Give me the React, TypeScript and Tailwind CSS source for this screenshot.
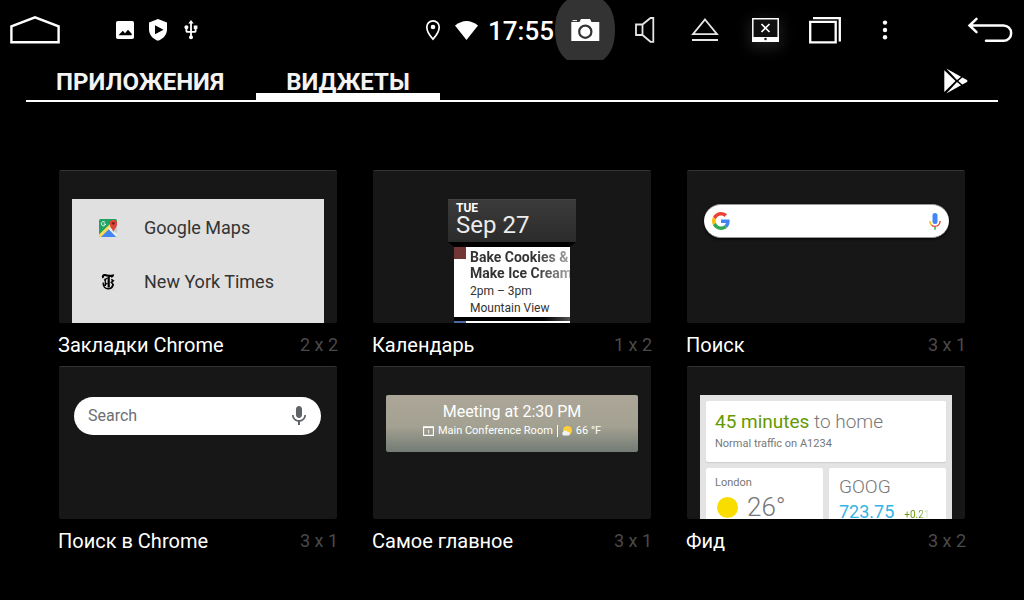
import type { ReactNode } from "react";
import { MdUsb, MdMic } from "react-icons/md";

function HomeIcon() {
  return (
    <svg width="50" height="28" viewBox="0 0 50 28" fill="none" stroke="#fff" strokeWidth="2.4">
      <path d="M1.4 26.2V10.4L25 1.4l23.6 9v15.8z" />
    </svg>
  );
}

function PictureIcon() {
  return (
    <svg width="18" height="18" viewBox="0 0 18 18" fill="#fff" fillRule="evenodd">
      <path d="M1.8 0h14.4Q18 0 18 1.8v14.4q0 1.8-1.8 1.8H1.8Q0 18 0 16.200V1.800Q0 0 1.800 0zM2.500 14.300h13.200v-1.600l-3.700-4-3 3.500-2.200-2.400z" />
    </svg>
  );
}

function ShieldIcon() {
  return (
    <svg width="18" height="22" viewBox="0 0 18 22" fill="#fff" fillRule="evenodd">
      <path d="M9 0l9 3.400V10.500C18 15.500 14.500 19.800 9 21.700 3.500 19.800 0 15.500 0 10.500V3.400zM6 6.300v9l8.500-4.500z" />
    </svg>
  );
}

function PinIcon() {
  return (
    <svg width="24" height="24" viewBox="0 0 24 24" fill="none" stroke="#fff" strokeWidth="1.7">
      <path d="M12 21.200S5.800 14.500 5.800 9a6.200 6.200 0 0 1 12.400 0c0 5.500-6.200 12.200-6.200 12.200z" />
      <circle cx="12" cy="9" r="2.300" fill="#fff" stroke="none" />
    </svg>
  );
}

function WifiIcon() {
  return (
    <svg width="23" height="19" viewBox="0 0 23 19" fill="#fff">
      <path d="M0 4.500Q11.500-4.500 23 4.500L11.500 19z" />
    </svg>
  );
}

function CameraIcon() {
  return (
    <svg width="60" height="60" viewBox="0 0 60 60">
      <path d="M12 0C4 6 0 16 0 30s4 24 12 30h36c8-6 12-16 12-30S56 6 48 0z" fill="#333" />
      <path d="M16.300 22h8.200l1.500-3h9l1.500 3H44.300v19h-28z" fill="#fff" />
      <path d="M17.500 20.600h4.500" stroke="#fff" strokeWidth="1" />
      <circle cx="30.300" cy="31.700" r="6.100" fill="#fff" stroke="#333" strokeWidth="2.200" />
    </svg>
  );
}

function SpeakerIcon() {
  return (
    <svg width="20" height="26" viewBox="0 0 20 26" fill="none" stroke="#e6e6e6" strokeWidth="1.800">
      <path d="M1 7.500h6.500v10.500H1zM7.500 7.500L15.500 1h2.800v23.800h-2.800L7.500 18" />
    </svg>
  );
}

function EjectIcon() {
  return (
    <svg width="28" height="24" viewBox="0 0 28 24" fill="none" stroke="#e6e6e6">
      <path d="M14 1.500L26 16.200H2z" strokeWidth="1.800" />
      <path d="M1 22h26" strokeWidth="2" />
    </svg>
  );
}

function ScreenOffIcon() {
  return (
    <svg width="27" height="24" viewBox="0 0 27 24" fill="none" stroke="#fff">
      <path d="M.800.800h25.400v22.400H.800z" fill="#111" strokeWidth="1.500" />
      <path d="M0 19h27v5H0z" fill="#fff" stroke="none" />
      <path d="M9.500 6l8 8M17.500 6l-8 8" strokeWidth="1.700" />
      <circle cx="13.500" cy="21" r="1.300" fill="#222" stroke="none" />
    </svg>
  );
}

function RecentsIcon() {
  return (
    <svg width="32" height="27" viewBox="0 0 32 27" fill="none" stroke="#fff" strokeWidth="2.300">
      <path d="M4 1.200h26.800v23.300" />
      <path d="M1.200 4.800h25.500v20.500H1.200z" />
    </svg>
  );
}

function DotsIcon() {
  return (
    <svg width="6" height="20" viewBox="0 0 6 20" fill="#fff">
      <circle cx="3" cy="2.600" r="2.200" />
      <circle cx="3" cy="10" r="2.200" />
      <circle cx="3" cy="17.300" r="2.200" />
    </svg>
  );
}

function BackIcon() {
  return (
    <svg width="46" height="26" viewBox="0 0 46 26" fill="none" stroke="#fff" strokeWidth="2.500" strokeLinecap="round">
      <path d="M2.500 8.500h34a7.600 7.600 0 0 1 0 15.300H19M9.500 1.800L2.500 8.500l7 6.700" />
    </svg>
  );
}

function PlayStoreIcon() {
  return (
    <svg width="24" height="26" viewBox="0 0 24 26" fill="#fff">
      <path d="M.300 2.300L11.500 13 .300 24z" />
      <path d="M2.300.500L17 8.700l-4 3.300z" />
      <path d="M2.300 25.500L17 17.300l-4-3.300z" />
      <path d="M18.300 9.500l4.700 2.600q1 .900 0 1.800l-4.700 2.600L14.300 13z" />
    </svg>
  );
}

function MapsIcon() {
  return (
    <svg width="18" height="18" viewBox="0 0 18 18">
      <clipPath id="maps-tile">
        <rect width="18" height="18" rx="1.500" />
      </clipPath>
      <g clipPath="url(#maps-tile)">
        <path d="M0 0h18v18H0z" fill="#1fa463" />
        <path d="M18 5v13L9.500 9.500z" fill="#c5c9cc" />
        <path d="M1 18L9.500 10 18 18z" fill="#4285f4" />
        <path d="M0 15.500L11 5l2 2L2 18H0z" fill="#ffd950" />
        <path d="M9 9.500l1.800-1.500L18 15v3h-.800z" fill="#eee" />
      </g>
      <path d="M14.300 13.500c-.300-3.500-3.600-5-3.600-9a3.700 3.700 0 0 1 7.400 0c0 4-3.500 5.500-3.800 9z" fill="#dc4437" />
      <circle cx="14.300" cy="4.300" r="1.400" fill="#7a231c" />
      <path d="M6 3.400a2.100 2.100 0 1 0 .500 1.600H4.600" fill="none" stroke="#fff" strokeWidth="1" />
    </svg>
  );
}

function TimesIcon() {
  return (
    <svg width="18" height="18" viewBox="0 0 18 18" fill="none" stroke="#000">
      <path d="M4.300 4.800C3.300 3.300 4.300 1.800 6 2c2.500.300 5 1.800 8.300.400" strokeWidth="2.200" />
      <path d="M14.400 1.200c.300 1.800-.600 3-2.400 3" strokeWidth="1" />
      <path d="M9.700 4v10.500" strokeWidth="2.200" />
      <path d="M6.300 5.500v7.500M5 7.200L8.500 5M5 12.600L8.500 10" strokeWidth="1.300" />
      <path d="M4.200 9.500c-.500 4 2 6.300 4.800 6.300 2.700 0 4.700-1.500 5.300-4.300" strokeWidth="1.400" />
      <path d="M12.300 6.300l2 1.500-2 1.500 1.800 2-1.300 2.700" strokeWidth="1.500" />
    </svg>
  );
}

function GoogleIcon() {
  return (
    <svg width="18" height="18" viewBox="0 0 48 48">
      <path fill="#EA4335" d="M24 9.500c3.540 0 6.710 1.220 9.210 3.600l6.850-6.850C35.900 2.380 30.470 0 24 0 14.620 0 6.510 5.380 2.560 13.220l7.980 6.190C12.430 13.720 17.740 9.500 24 9.500z" />
      <path fill="#4285F4" d="M46.980 24.550c0-1.570-.150-3.090-.380-4.550H24v9.020h12.940c-.580 2.960-2.260 5.480-4.780 7.180l7.730 6c4.510-4.180 7.090-10.360 7.090-17.650z" />
      <path fill="#FBBC05" d="M10.530 28.590c-.480-1.450-.760-2.990-.760-4.590s.270-3.140.760-4.590l-7.980-6.190C.920 16.460 0 20.120 0 24c0 3.880.920 7.540 2.560 10.780l7.970-6.190z" />
      <path fill="#34A853" d="M24 48c6.480 0 11.930-2.130 15.890-5.810l-7.730-6c-2.150 1.450-4.920 2.300-8.160 2.300-6.260 0-11.570-4.220-13.470-9.910l-7.980 6.190C6.510 42.620 14.620 48 24 48z" />
    </svg>
  );
}

function ColorMicIcon() {
  return (
    <svg width="12" height="17" viewBox="0 0 12 17" fill="none" strokeWidth="1.400">
      <rect x="3.500" y="0" width="5" height="11" rx="2.500" fill="#4285f4" />
      <path d="M.900 8c0 2 .700 3.300 1.800 4.300" stroke="#fbbc05" />
      <path d="M2.500 12.200C3.500 13 4.700 13.400 6 13.400c3 0 5.100-2.300 5.100-5.400" stroke="#ea4335" />
      <path d="M6 14v2.800" stroke="#34a853" />
    </svg>
  );
}

function EventIcon() {
  return (
    <svg width="11" height="10" viewBox="0 0 11 10" fill="none" stroke="#fff">
      <path d="M.600 1h9.800v8.400H.600z" strokeWidth="1.100" />
      <path d="M0 1.300h11" strokeWidth="1.600" />
      <path d="M4.700 4.300h1v3.200" strokeWidth=".8" />
    </svg>
  );
}

function WeatherIcon() {
  return (
    <svg width="10" height="10" viewBox="0 0 10 10">
      <circle cx="5.500" cy="4.500" r="4.500" fill="#fdd03b" />
      <path d="M2 9.600a2 2 0 0 1-.600-3.800 2.300 2.300 0 0 1 4.200.300A1.800 1.800 0 0 1 6.600 9.600z" fill="#f1f1f1" />
    </svg>
  );
}

function NavButton({ label, children }: { label: string; children: ReactNode }) {
  return (
    <button type="button" aria-label={label} className="flex h-[60px] w-[60px] shrink-0 items-center justify-center">
      {children}
    </button>
  );
}

function StatusBar() {
  return (
    <header className="flex h-[60px] items-center pr-1 pl-1">
      <button type="button" aria-label="Home" className="flex h-[60px] w-[62px] items-center justify-center">
        <HomeIcon />
      </button>
      <div className="ml-[50px] flex items-center gap-[15px]">
        <PictureIcon />
        <ShieldIcon />
        <span className="-ml-0.5"><MdUsb size={22} color="#fff" /></span>
      </div>
      <div className="ml-auto flex items-center gap-[10px] pr-px">
        <PinIcon />
        <WifiIcon />
        <time className="pt-0.5 text-[26px] leading-8 font-medium">17:55</time>
      </div>
      <nav className="flex items-center">
        <NavButton label="Screenshot"><CameraIcon /></NavButton>
        <NavButton label="Volume"><SpeakerIcon /></NavButton>
        <NavButton label="Eject"><EjectIcon /></NavButton>
        <NavButton label="Screen off">
          <span className="flex shadow-[0_4px_14px_3px_#1c1c1c]"><ScreenOffIcon /></span>
        </NavButton>
        <NavButton label="Recent apps"><RecentsIcon /></NavButton>
        <NavButton label="Menu"><DotsIcon /></NavButton>
      </nav>
      <div className="ml-[45px]">
        <NavButton label="Back"><BackIcon /></NavButton>
      </div>
    </header>
  );
}

function Tabs() {
  return (
    <div className="mx-[26px] flex h-[42px] border-b-2 border-white text-2xl font-bold">
      <div role="tablist" className="flex">
        <button type="button" role="tab" aria-selected="false" className="border-b-[7px] border-black pt-2.5 pr-8 pl-[30px] leading-6 text-[#f3f3f3]">
          ПРИЛОЖЕНИЯ
        </button>
        <button type="button" role="tab" aria-selected="true" className="border-b-[7px] border-white px-[30px] pt-2.5 leading-6 text-[#f3f3f3]">
          ВИДЖЕТЫ
        </button>
      </div>
      <button type="button" aria-label="Play Store" className="ml-auto px-[30px] pt-0.5">
        <PlayStoreIcon />
      </button>
    </div>
  );
}

function WidgetCard({ name, size, children }: { name: string; size: string; children: ReactNode }) {
  return (
    <article>
      <div className="mx-px h-[153px] overflow-hidden rounded-xs border-t border-[#333] bg-[#171717] px-[13px] pt-7">
        {children}
      </div>
      <div className="flex h-[43px] items-center justify-between">
        <h2 className="text-xl">{name}</h2>
        <span className="text-lg text-[#4a4a4a]">{size}</span>
      </div>
    </article>
  );
}

function BookmarksPreview() {
  return (
    <ul className="h-full bg-[#e0e0e0] pt-0.5 text-lg text-[#333]">
      <li className="flex h-[54px] items-center gap-[27px] pl-[27px]">
        <MapsIcon />
        Google Maps
      </li>
      <li className="flex h-[54px] items-center gap-[27px] pl-[27px]">
        <TimesIcon />
        New York Times
      </li>
    </ul>
  );
}

function CalendarPreview() {
  return (
    <div className="mx-auto w-32">
      <div className="h-[43px] border-t border-[#444] bg-linear-to-b from-[#3b3b3b] to-[#2b2b2b] pt-0.5 pl-2">
        <p className="text-xs leading-3 font-bold">TUE</p>
        <p className="text-2xl leading-[22px] text-[#ececec]">Sep 27</p>
      </div>
      <div className="h-[5px] bg-black [clip-path:polygon(0_0,100%_0,95%_100%,5%_100%)]" />
      <div className="mx-1.5 flex h-[70px] gap-1 bg-white text-[#333]">
        <div className="size-3 shrink-0 bg-[#733636]" />
        <div className="overflow-hidden pt-0.5 whitespace-nowrap">
          <p className="bg-linear-to-r from-[#333] from-65% to-[#aaa] bg-clip-text text-sm leading-4 font-bold text-transparent">
            Bake Cookies &amp;
            <br />
            Make Ice Cream
          </p>
          <p className="pt-0.5 text-xs leading-[17px]">
            2pm – 3pm
            <br />
            Mountain View
          </p>
        </div>
      </div>
      <div className="mx-1.5 h-1 bg-linear-to-r from-black from-70% to-[#555]" />
      <div className="mx-1.5 flex h-3 bg-white">
        <div className="w-3 bg-[#4e68a0]" />
      </div>
    </div>
  );
}

function GoogleSearchPreview() {
  return (
    <div className="mr-[3px] ml-1 mt-[5px] flex h-[34px] items-center rounded-full border-y border-[#999] bg-white px-2 shadow-[0_1px_3px_#000]">
      <GoogleIcon />
      <input type="text" aria-label="Google" className="min-w-0 flex-1 text-base text-[#333] outline-none" />
      <button type="button" aria-label="Voice">
        <ColorMicIcon />
      </button>
    </div>
  );
}

function ChromeSearchPreview() {
  return (
    <div className="mr-[3px] ml-0.5 mt-0.5 flex h-[38px] items-center rounded-full bg-white pr-2.5 pl-3.5">
      <input
        type="text"
        aria-label="Chrome"
        placeholder="Search"
        className="min-w-0 flex-1 text-base text-[#5f6368] outline-none placeholder:text-[#6b6f74]"
      />
      <button type="button" aria-label="Voice">
        <MdMic size={24} color="#5f6368" />
      </button>
    </div>
  );
}

function GlancePreview() {
  return (
    <div className="flex h-[57px] flex-col items-center rounded-xs bg-linear-to-b from-[#aca698] via-[#a3a192] via-55% to-[#737c75] pt-1.5 text-white">
      <p className="text-base leading-[22px]">Meeting at 2:30 PM</p>
      <div className="flex items-center gap-1 text-[11px] leading-4">
        <EventIcon />
        <span>Main Conference Room</span>
        <span className="h-3 w-px bg-white" />
        <WeatherIcon />
        <span>66 °F</span>
      </div>
    </div>
  );
}

function FeedPreview() {
  return (
    <div className="grid grid-cols-2 gap-1.5 bg-[#e3e3e3] p-1.5 text-[#777]">
      <section className="col-span-2 h-[61px] rounded-xs bg-white pt-2 pl-[9px] shadow-[0_1px_1px_#ccc]">
        <p className="text-[19px] leading-[26px] font-light">
          <span className="font-normal text-[#690]">45 minutes</span> to home
        </p>
        <p className="text-[11px] leading-[18px]">Normal traffic on A1234</p>
      </section>
      <section className="h-[70px] rounded-xs bg-white pt-[7px] pl-[9px]">
        <p className="text-[11px] leading-4">London</p>
        <div className="flex items-center gap-[9px] pl-0.5">
          <span className="size-[21px] rounded-full bg-[#f9dc00]" />
          <span className="text-[26px] leading-8 font-light">26°</span>
        </div>
      </section>
      <section className="h-[70px] rounded-xs bg-white pt-1.5 pl-2.5">
        <p className="text-[19px] leading-[26px] font-light">GOOG</p>
        <p className="flex items-baseline gap-2.5 text-lg leading-6 text-[#33b5e5]">
          723.75
          <span className="bg-linear-to-r from-[#690] from-60% to-white bg-clip-text text-[10px] text-transparent">+0.21</span>
        </p>
      </section>
    </div>
  );
}

export default function App() {
  return (
    <div className="min-h-screen bg-black font-['Roboto',sans-serif] text-white">
      <StatusBar />
      <Tabs />
      <main className="grid grid-cols-3 gap-x-[34px] px-[58px] pt-[68px]">
        <WidgetCard name="Закладки Chrome" size="2 x 2"><BookmarksPreview /></WidgetCard>
        <WidgetCard name="Календарь" size="1 x 2"><CalendarPreview /></WidgetCard>
        <WidgetCard name="Поиск" size="3 x 1"><GoogleSearchPreview /></WidgetCard>
        <WidgetCard name="Поиск в Chrome" size="3 x 1"><ChromeSearchPreview /></WidgetCard>
        <WidgetCard name="Самое главное" size="3 x 1"><GlancePreview /></WidgetCard>
        <WidgetCard name="Фид" size="3 x 2"><FeedPreview /></WidgetCard>
      </main>
    </div>
  );
}
